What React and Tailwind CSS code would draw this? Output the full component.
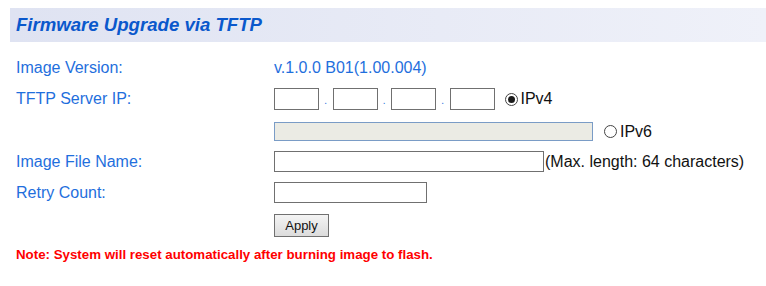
const Radio = ({ checked }) => (
  <span className="inline-flex w-[13px] h-[13px] rounded-full border border-[#444] bg-white items-center justify-center">
    {checked && <span className="w-[7px] h-[7px] rounded-full bg-[#1b1b1b]" />}
  </span>
);

const IpBox = () => <input className="w-[45px] h-[22px] border border-[#707070] bg-white outline-none" />;

const Dot = () => (
  <span className="w-[13.5px] h-[22px] flex items-end justify-center pb-[4px] text-[10px] leading-none text-[#1f6fdd]">.</span>
);

const Row = ({ label, className, children }) => (
  <div className={`flex items-center ${className}`}>
    <div className="w-[258px] text-[16px] leading-none text-[#1f6fdd]">{label}</div>
    <div className="flex items-center">{children}</div>
  </div>
);

export default function App() {
  return (
    <div className="w-[766px] h-[286px] bg-white font-['Liberation_Sans',Arial,sans-serif] pt-[8px]">
      <div className="ml-[10px] h-[34px] flex items-center pl-[6px] bg-gradient-to-r from-[#dfe3f2] to-[#eff1f9]">
        <h1 className="text-[18.6px] font-bold italic text-[#0a58cc] leading-none">Firmware Upgrade via TFTP</h1>
      </div>

      <div className="pl-[16px]">
        <Row label="Image Version:" className="mt-[15px] h-[22px]">
          <span className="text-[16px] text-[#1f6fdd] leading-none">v.1.0.0 B01(1.00.004)</span>
        </Row>

        <Row label="TFTP Server IP:" className="mt-[9px] h-[22px]">
          <IpBox />
          <Dot />
          <IpBox />
          <Dot />
          <IpBox />
          <Dot />
          <IpBox />
          <span className="ml-[10px] flex items-center gap-[3px] text-[16px] text-[#111] leading-none">
            <Radio checked />
            IPv4
          </span>
        </Row>

        <Row label="" className="mt-[12px] h-[19px]">
          <input disabled className="w-[319px] h-[19px] border border-[#7a9cc6] bg-[#ebebe4]" />
          <span className="ml-[11px] flex items-center gap-[3px] text-[16px] text-[#111] leading-none">
            <Radio />
            IPv6
          </span>
        </Row>

        <Row label="Image File Name:" className="mt-[10px] h-[21px]">
          <input className="w-[270px] h-[21px] border border-[#707070] bg-white outline-none" />
          <span className="ml-[1px] text-[16px] text-[#111] leading-none">(Max. length: 64 characters)</span>
        </Row>

        <Row label="Retry Count:" className="mt-[10px] h-[21px]">
          <input className="w-[153px] h-[21px] border border-[#707070] bg-white outline-none" />
        </Row>

        <Row label="" className="mt-[11px] h-[23px]">
          <button className="w-[55px] h-[23px] border border-[#707070] bg-gradient-to-b from-[#f4f4f4] to-[#dcdcdc] text-[13px] text-[#111] leading-none">
            Apply
          </button>
        </Row>

        <p className="mt-[11px] text-[13.3px] font-bold text-[#ff0000] leading-none">
          Note: System will reset automatically after burning image to flash.
        </p>
      </div>
    </div>
  );
}
